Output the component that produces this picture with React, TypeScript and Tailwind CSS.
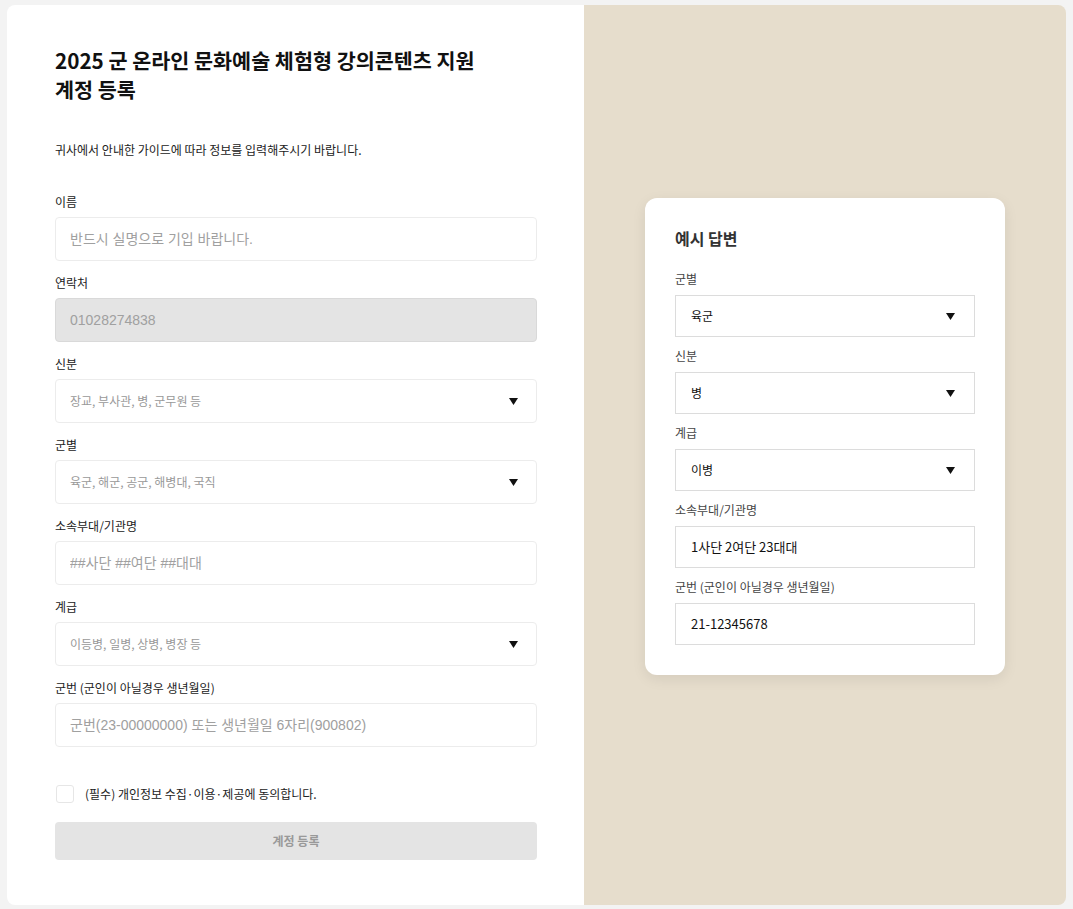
import React from "react";

const FONT = { fontFamily: '"Noto Sans CJK KR", "Noto Sans", sans-serif' };
const INPUT_FONT = { fontFamily: '"Liberation Sans", "Noto Sans CJK KR", sans-serif' };

function Caret() {
  return (
    <svg width="9" height="7" viewBox="0 0 9 7" className="shrink-0">
      <polygon points="0,0 9,0 4.5,7" fill="#111" />
    </svg>
  );
}

function Field({ label, children }: { label: string; children: React.ReactNode }) {
  return (
    <div className="flex flex-col">
      <label className="text-[12px] leading-[14px] text-[#222] mb-[8px]">{label}</label>
      {children}
    </div>
  );
}

function TextBox({ placeholder, disabled }: { placeholder: string; disabled?: boolean }) {
  return (
    <input
      disabled={disabled}
      placeholder={placeholder}
      style={INPUT_FONT}
      className={
        "h-[44px] w-full rounded-[4px] border px-[14px] text-[14px] outline-none placeholder:text-[#a0a0a0] " +
        (disabled ? "bg-[#e4e4e4] border-[#d9d9d9]" : "bg-white border-[#ececec]")
      }
    />
  );
}

function SelectBox({ placeholder }: { placeholder: string }) {
  return (
    <div className="flex h-[44px] w-full items-center justify-between rounded-[4px] border border-[#ececec] bg-white pl-[14px] pr-[18px]">
      <span className="text-[12px] text-[#999]">{placeholder}</span>
      <Caret />
    </div>
  );
}

function ExampleSelect({ value }: { value: string }) {
  return (
    <div className="flex h-[42px] w-full items-center justify-between border border-[#dcdcdc] bg-white pl-[15px] pr-[19px]">
      <span className="text-[12px] text-[#111]">{value}</span>
      <Caret />
    </div>
  );
}

function ExampleInput({ value }: { value: string }) {
  return (
    <div className="flex h-[42px] w-full items-center border border-[#dcdcdc] bg-white px-[15px]">
      <span className="text-[13px] text-[#111]">{value}</span>
    </div>
  );
}

function ExampleField({ label, children }: { label: string; children: React.ReactNode }) {
  return (
    <div className="flex flex-col">
      <span className="text-[12px] leading-[14px] text-[#444] mb-[9px]">{label}</span>
      {children}
    </div>
  );
}

export default function App() {
  return (
    <div style={FONT} className="min-h-[909px] bg-[#f3f3f3] px-[7px] pt-[5px] pb-[4px]">
      <div className="flex h-[900px] overflow-hidden rounded-[8px]">
        {/* FORM */}
        <div className="w-[577px] bg-white pl-[48px] pr-[47px] pt-[41px]">
          <h1 className="text-[20.7px] font-bold leading-[29px] text-[#111]">
            2025 군 온라인 문화예술 체험형 강의콘텐츠 지원
            <br />
            계정 등록
          </h1>
          <p className="mt-[39px] text-[12px] leading-[14px] text-[#222]">
            귀사에서 안내한 가이드에 따라 정보를 입력해주시기 바랍니다.
          </p>

          <div className="mt-[38px] flex flex-col gap-[15px]">
            <Field label="이름">
              <TextBox placeholder="반드시 실명으로 기입 바랍니다." />
            </Field>
            <Field label="연락처">
              <TextBox placeholder="01028274838" disabled />
            </Field>
            <Field label="신분">
              <SelectBox placeholder="장교, 부사관, 병, 군무원 등" />
            </Field>
            <Field label="군별">
              <SelectBox placeholder="육군, 해군, 공군, 해병대, 국직" />
            </Field>
            <Field label="소속부대/기관명">
              <TextBox placeholder="##사단 ##여단 ##대대" />
            </Field>
            <Field label="계급">
              <SelectBox placeholder="이등병, 일병, 상병, 병장 등" />
            </Field>
            <Field label="군번 (군인이 아닐경우 생년월일)">
              <TextBox placeholder="군번(23-00000000) 또는 생년월일 6자리(900802)" />
            </Field>
          </div>

          <label className="mt-[38px] flex items-center gap-[11px] pl-[1px]">
            <span className="h-[18px] w-[18px] rounded-[3px] border border-[#e6e6e6] bg-white" />
            <span className="text-[12px] text-[#222]">(필수) 개인정보 수집·이용·제공에 동의합니다.</span>
          </label>

          <button className="mt-[19px] h-[38px] w-full rounded-[4px] bg-[#e4e4e4] text-[12px] font-bold text-[#999]">
            계정 등록
          </button>
        </div>

        {/* EXAMPLE */}
        <div className="flex flex-1 items-start justify-center bg-[#e6ddcc] pt-[193px]">
          <div className="w-[360px] rounded-[12px] bg-white px-[30px] pt-[30px] pb-[30px] shadow-[0_4px_14px_rgba(0,0,0,0.08)]">
            <h2 className="text-[16px] font-bold leading-[20px] text-[#333]">예시 답변</h2>
            <div className="mt-[24px] flex flex-col gap-[12px]">
              <ExampleField label="군별">
                <ExampleSelect value="육군" />
              </ExampleField>
              <ExampleField label="신분">
                <ExampleSelect value="병" />
              </ExampleField>
              <ExampleField label="계급">
                <ExampleSelect value="이병" />
              </ExampleField>
              <ExampleField label="소속부대/기관명">
                <ExampleInput value="1사단 2여단 23대대" />
              </ExampleField>
              <ExampleField label="군번 (군인이 아닐경우 생년월일)">
                <ExampleInput value="21-12345678" />
              </ExampleField>
            </div>
          </div>
        </div>
      </div>
    </div>
  );
}
